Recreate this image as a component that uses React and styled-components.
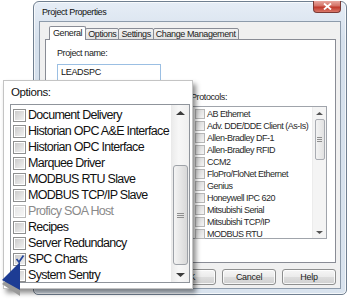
import React from 'react';
import styled, { createGlobalStyle } from 'styled-components';

const GlobalStyle = createGlobalStyle`
  html, body {
    margin: 0;
    padding: 0;
    background: #fff;
  }
  body {
    width: 348px;
    height: 308px;
    overflow: hidden;
    font-family: "Liberation Sans", Arial, sans-serif;
  }
`;

const options = [
  { name: 'Document Delivery' },
  { name: 'Historian OPC A&E Interface' },
  { name: 'Historian OPC Interface' },
  { name: 'Marquee Driver' },
  { name: 'MODBUS RTU Slave' },
  { name: 'MODBUS TCP/IP Slave' },
  { name: 'Proficy SOA Host', disabled: true },
  { name: 'Recipes' },
  { name: 'Server Redundancy' },
  { name: 'SPC Charts', checked: true },
  { name: 'System Sentry' },
];

const protocols = [
  'AB Ethernet',
  'Adv. DDE/DDE Client (As-Is)',
  'Allen-Bradley DF-1',
  'Allen-Bradley RFID',
  'CCM2',
  'FloPro/FloNet Ethernet',
  'Genius',
  'Honeywell IPC 620',
  'Mitsubishi Serial',
  'Mitsubishi TCP/IP',
  'MODBUS RTU',
];

const tabs = ['General', 'Options', 'Settings', 'Change Management'];

const Stage = styled.div`
  position: relative;
  width: 348px;
  height: 308px;
  box-sizing: border-box;
  padding: 1px 1px 0 33px;
`;

/* the dialog in the back */
const Window = styled.div`
  width: 314px;
  height: 294px;
  box-sizing: border-box;
  border: 1px solid #707f90;
  border-radius: 6px 6px 5px 5px;
  background: linear-gradient(#e6edf6, #d5e0ec 40px, #d9e3ee);
  box-shadow: inset 0 0 0 1px rgba(255, 255, 255, 0.7);
  display: flex;
  flex-direction: column;
  padding: 0 5px 5px;
`;

const TitleBar = styled.div`
  height: 19px;
  display: flex;
  justify-content: space-between;
  align-items: flex-start;
`;

const Title = styled.span`
  font-size: 9px;
  letter-spacing: -0.4px;
  color: #111;
  padding: 5px 0 0 3px;
`;

const CloseButton = styled.div`
  width: 28px;
  height: 12px;
  margin-top: -1px;
  box-sizing: border-box;
  border: 1px solid #7c3a35;
  border-top: none;
  border-radius: 0 0 4px 4px;
  background: linear-gradient(#e8a79f, #d47166 45%, #c0382b 55%, #d9786a);
  display: flex;
  align-items: center;
  justify-content: center;
`;

const Client = styled.div`
  flex: 1;
  border: 1px solid #8d9bab;
  background: #f0f0f0;
  padding: 4px 4px 0 5px;
  display: flex;
  flex-direction: column;
`;

const TabStrip = styled.div`
  display: flex;
  align-items: flex-end;
  height: 14px;
  padding-left: 4px;
  margin-bottom: -1px;
  position: relative;
  z-index: 1;
`;

const Tab = styled.div`
  height: ${p => (p.$active ? '14px' : '12px')};
  box-sizing: border-box;
  padding: 0 ${p => (p.$active ? '3px' : '2px')};
  margin-right: -1px;
  border: 1px solid #898c95;
  border-bottom: ${p => (p.$active ? 'none' : '1px solid #898c95')};
  border-radius: 2px 2px 0 0;
  background: ${p => (p.$active ? '#fff' : 'linear-gradient(#f2f2f2, #e3e3e3)')};
  font-size: 9px;
  letter-spacing: -0.4px;
  color: #222;
  line-height: ${p => (p.$active ? '12px' : '10px')};
  white-space: nowrap;
`;

const Panel = styled.div`
  height: 224px;
  box-sizing: border-box;
  border: 1px solid #898c95;
  background: #fff;
  padding: 8px 0 0 11px;
`;

const Label = styled.div`
  font-size: 9px;
  letter-spacing: -0.4px;
  line-height: 11px;
  color: #222;
`;

const TextBox = styled.div`
  width: 104px;
  height: 17px;
  box-sizing: border-box;
  margin-top: 5px;
  border: 1px solid #9bbfe3;
  background: #fff;
  font-size: 9px;
  letter-spacing: -0.3px;
  line-height: 15px;
  padding-left: 3px;
  color: #111;
`;

const Columns = styled.div`
  display: flex;
  gap: 10px;
  margin-top: 11px;
`;

const Column = styled.div`
  width: ${p => p.$w}px;
  display: flex;
  flex-direction: column;
  gap: 3px;
`;

const SmallList = styled.div`
  height: 133px;
  box-sizing: border-box;
  border: 1px solid #a0a4ab;
  background: #fff;
  display: flex;
`;

const SmallRows = styled.div`
  flex: 1;
  padding: 1px 0 0 3px;
`;

const SmallRow = styled.div`
  height: 12px;
  display: flex;
  align-items: center;
  gap: 2px;
  font-size: 9px;
  letter-spacing: -0.5px;
  color: #2a2a2a;
  white-space: nowrap;
`;

const SmallBox = styled.span`
  width: 10px;
  height: 10px;
  box-sizing: border-box;
  border: 1px solid #b7b7b7;
  background: linear-gradient(135deg, #d6d6d6, #f4f4f4);
  flex: none;
`;

const SmallScroll = styled.div`
  width: 13px;
  background: #f4f4f4;
  border-left: 1px solid #ececec;
  display: flex;
  flex-direction: column;
  align-items: center;
`;

const ScrollArrow = styled.div`
  height: ${p => p.$h}px;
  width: 100%;
  display: flex;
  align-items: center;
  justify-content: center;
  flex: none;
`;

const SmallThumb = styled.div`
  width: 10px;
  height: 41px;
  box-sizing: border-box;
  border: 1px solid #a9acb2;
  border-radius: 2px;
  background: linear-gradient(90deg, #f3f3f3, #e2e2e2);
  display: flex;
  align-items: center;
  justify-content: center;
`;

const Grip = styled.div`
  width: ${p => p.$w}px;
  height: 5px;
  background: repeating-linear-gradient(#8f8f8f 0 1px, transparent 1px 2px);
`;

const Spacer = styled.div`
  flex: 1;
`;

const ButtonRow = styled.div`
  display: flex;
  justify-content: flex-end;
  gap: 6px;
  margin-top: 6px;
  padding-right: 0;
`;

const Button = styled.div`
  width: 54px;
  height: 16px;
  box-sizing: border-box;
  border: 1px solid #8e8f8f;
  border-radius: 3px;
  background: linear-gradient(#f6f6f6, #ebebeb 50%, #dddddd 50%, #d0d0d0);
  box-shadow: inset 0 0 0 1px rgba(255, 255, 255, 0.8);
  font-size: 9px;
  letter-spacing: -0.3px;
  line-height: 14px;
  text-align: center;
  color: #222;
`;

/* the enlarged callout over the dialog */
const Callout = styled.div`
  position: absolute;
  left: 3px;
  top: 80px;
  width: 190px;
  height: 209px;
  box-sizing: border-box;
  border: 1px solid #c4c4c4;
  background: #fff;
  box-shadow: 3px 4px 5px rgba(0, 0, 0, 0.45);
  padding: 4px 2px 0 6px;
  z-index: 2;
`;

const CalloutLabel = styled.div`
  font-size: 11.5px;
  letter-spacing: -0.4px;
  line-height: 14px;
  color: #111;
  padding-left: 1px;
`;

const List = styled.div`
  margin-top: 5px;
  height: 179px;
  box-sizing: border-box;
  border: 1px solid #8f949b;
  display: flex;
`;

const Rows = styled.div`
  flex: 1;
  padding: 2px 0 0 2px;
  overflow: hidden;
`;

const Row = styled.div`
  height: 16px;
  display: flex;
  align-items: center;
  gap: 2px;
  font-size: 12.5px;
  letter-spacing: -0.7px;
  color: ${p => (p.$disabled ? '#8a8a8a' : '#111')};
  white-space: nowrap;
`;

const Check = styled.span`
  width: 13px;
  height: 13px;
  box-sizing: border-box;
  border: 1px solid ${p => (p.$disabled ? '#b9b9b9' : '#8e8f8f')};
  background: #fff;
  padding: 1px;
  flex: none;
  display: flex;
`;

const CheckInner = styled.span`
  flex: 1;
  background: ${p => (p.$disabled ? 'linear-gradient(135deg, #e6e6e6, #f6f6f6)' : 'linear-gradient(135deg, #cbcbcb, #f1f1f1)')};
  display: flex;
  align-items: center;
  justify-content: center;
`;

const ScrollBar = styled.div`
  width: 17px;
  background: linear-gradient(90deg, #ececec, #f7f7f7 40%, #efefef);
  border-left: 1px solid #eaeaea;
  display: flex;
  flex-direction: column;
  align-items: center;
`;

const Thumb = styled.div`
  width: 15px;
  height: 100px;
  margin-top: 44px;
  box-sizing: border-box;
  border: 1px solid #9ea2a8;
  border-radius: 3px;
  background: linear-gradient(90deg, #f4f4f4, #e6e6e6 50%, #d8d8d8);
  display: flex;
  align-items: center;
  justify-content: center;
`;

const Pointer = styled.svg`
  position: absolute;
  left: 2px;
  top: 262px;
  z-index: 3;
`;

const Arrow = ({ up, size = 4, color = '#4a4a4a' }) => (
  <svg width={size * 2 + 1} height={size} viewBox={`0 0 ${size * 2 + 1} ${size}`}>
    <polygon
      points={up ? `0,${size} ${size * 2 + 1},${size} ${size + 0.5},0` : `0,0 ${size * 2 + 1},0 ${size + 0.5},${size}`}
      fill={color}
    />
  </svg>
);

export default function App() {
  return (
    <>
      <GlobalStyle />
      <Stage>
        <Window>
          <TitleBar>
            <Title>Project Properties</Title>
            <CloseButton>
              <svg width="9" height="7" viewBox="0 0 9 7">
                <path d="M1 0.5 L8 6.5 M8 0.5 L1 6.5" stroke="#fff" strokeWidth="1.8" />
              </svg>
            </CloseButton>
          </TitleBar>
          <Client>
            <TabStrip>
              {tabs.map((t, i) => (
                <Tab key={t} $active={i === 0}>{t}</Tab>
              ))}
            </TabStrip>
            <Panel>
              <Label>Project name:</Label>
              <TextBox>LEADSPC</TextBox>
              <Columns>
                <Column $w={124}>
                  <Label>Options:</Label>
                  <SmallList />
                </Column>
                <Column $w={136}>
                  <Label>Protocols:</Label>
                  <SmallList>
                    <SmallRows>
                      {protocols.map(p => (
                        <SmallRow key={p}>
                          <SmallBox />
                          {p}
                        </SmallRow>
                      ))}
                    </SmallRows>
                    <SmallScroll>
                      <ScrollArrow $h={12}><Arrow up size={3} color="#555" /></ScrollArrow>
                      <SmallThumb><Grip $w={5} /></SmallThumb>
                      <Spacer />
                      <ScrollArrow $h={12}><Arrow size={3} color="#555" /></ScrollArrow>
                    </SmallScroll>
                  </SmallList>
                </Column>
              </Columns>
            </Panel>
            <ButtonRow>
              <Button>OK</Button>
              <Button>Cancel</Button>
              <Button>Help</Button>
            </ButtonRow>
          </Client>
        </Window>

        <Callout>
          <CalloutLabel>Options:</CalloutLabel>
          <List>
            <Rows>
              {options.map(o => (
                <Row key={o.name} $disabled={o.disabled}>
                  <Check $disabled={o.disabled}>
                    <CheckInner $disabled={o.disabled}>
                      {o.checked && (
                        <svg width="10" height="10" viewBox="0 0 10 10">
                          <path d="M1.5 5 L4 8 L8.5 1.5" fill="none" stroke="#24469c" strokeWidth="1.7" />
                        </svg>
                      )}
                    </CheckInner>
                  </Check>
                  {o.name}
                </Row>
              ))}
            </Rows>
            <ScrollBar>
              <ScrollArrow $h={16}><Arrow up size={4} color="#3c3c3c" /></ScrollArrow>
              <Thumb><Grip $w={7} /></Thumb>
              <Spacer />
              <ScrollArrow $h={15}><Arrow size={4} color="#3c3c3c" /></ScrollArrow>
            </ScrollBar>
          </List>
        </Callout>

        <Pointer width="20" height="34" viewBox="0 0 20 34">
          <polygon points="0,22 18,6 18,34" fill="#9a9a9a" />
          <polygon points="0,18 18,0 18,28" fill="#1d3c94" />
        </Pointer>
      </Stage>
    </>
  );
}
